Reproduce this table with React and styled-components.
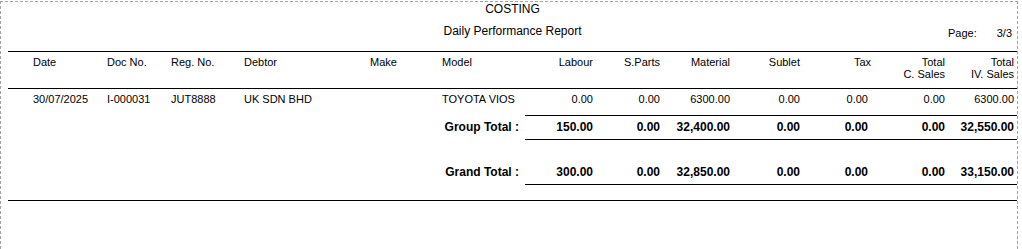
import React from "react";
import styled, { createGlobalStyle } from "styled-components";

const GlobalStyle = createGlobalStyle`
  html, body {
    margin: 0;
    padding: 0;
    background: #ffffff;
    overflow: hidden;
  }
  body {
    font-family: "Liberation Sans", Arial, sans-serif;
    color: #000000;
  }
`;

const COLS =
  "25px 74px 64px 73px 126px 72px 83px 68px 67px 70px 70px 71px 74px 69px 3px";
const FIG_COLS = "68px 67px 70px 70px 71px 74px 69px 3px";

const Sheet = styled.div`
  box-sizing: border-box;
  margin-top: 1px;
  width: 1018px;
  height: 248px;
  border: 1px dashed #a3a3a3;
  border-bottom: none;
  padding-left: 7px;
  display: flex;
  flex-direction: column;
`;

const TitleBlock = styled.header`
  display: grid;
  grid-template-columns: 1fr auto 1fr;
  row-gap: 8px;
  align-items: start;
`;

const Title = styled.div`
  grid-column: 2;
  font-size: 12px;
  line-height: 14px;
  text-align: center;
  white-space: nowrap;
`;

const PageInfo = styled.div`
  grid-column: 3;
  justify-self: end;
  width: 64px;
  margin-right: 5px;
  padding-top: 3px;
  display: flex;
  justify-content: space-between;
  font-size: 11px;
  line-height: 13px;
`;

const HeaderGrid = styled.div`
  margin-top: 11px;
  display: grid;
  grid-template-columns: ${COLS};
  border-top: 1px solid #000;
  border-bottom: 1px solid #000;
  padding: 4px 0 8px;
`;

const HeadCell = styled.div`
  grid-column: ${(p) => p.$col};
  font-size: 11px;
  line-height: 12px;
  white-space: pre-line;
  text-align: ${(p) => (p.$right ? "right" : "left")};
`;

const DataRow = styled.div`
  display: grid;
  grid-template-columns: ${COLS};
  padding-top: 4px;
`;

const DataCell = styled.div`
  grid-column: ${(p) => p.$col};
  font-size: 11px;
  line-height: 13px;
  white-space: nowrap;
  text-align: ${(p) => (p.$right ? "right" : "left")};
  padding-right: ${(p) => p.$pr || 0}px;
`;

const TotalRow = styled.div`
  display: grid;
  grid-template-columns: ${COLS};
  align-items: end;
  margin-top: ${(p) => p.$gap}px;
`;

const TotalLabel = styled.div`
  grid-column: 1 / 8;
  text-align: right;
  padding-right: 6px;
  padding-bottom: 6px;
  font-size: 12px;
  line-height: 14px;
  font-weight: 700;
  white-space: nowrap;
`;

const Figures = styled.div`
  grid-column: 8 / -1;
  display: grid;
  grid-template-columns: ${FIG_COLS};
  border-top: ${(p) => (p.$topLine ? "1px solid #000" : "none")};
  border-bottom: 1px solid #000;
  padding: ${(p) => (p.$topLine ? 4 : 0)}px 0 5px;
`;

const Figure = styled.div`
  font-size: 12px;
  line-height: 14px;
  font-weight: 700;
  text-align: right;
  white-space: nowrap;
  padding-right: ${(p) => p.$pr || 0}px;
`;

const BottomRule = styled.div`
  margin-top: 15px;
  border-top: 1px solid #000;
`;

const headers = [
  { col: 2, text: "Date" },
  { col: 3, text: "Doc No." },
  { col: 4, text: "Reg. No." },
  { col: 5, text: "Debtor" },
  { col: 6, text: "Make" },
  { col: 7, text: "Model" },
  { col: 8, text: "Labour", right: true },
  { col: 9, text: "S.Parts", right: true },
  { col: 10, text: "Material", right: true },
  { col: 11, text: "Sublet", right: true },
  { col: 12, text: "Tax", right: true },
  { col: 13, text: "Total\nC. Sales", right: true },
  { col: 14, text: "Total\nIV. Sales", right: true },
];

const row = [
  { col: 2, text: "30/07/2025" },
  { col: 3, text: "I-000031" },
  { col: 4, text: "JUT8888" },
  { col: 5, text: "UK SDN BHD" },
  { col: 6, text: "" },
  { col: 7, text: "TOYOTA VIOS" },
  { col: 8, text: "0.00", right: true },
  { col: 9, text: "0.00", right: true },
  { col: 10, text: "6300.00", right: true },
  { col: 11, text: "0.00", right: true },
  { col: 12, text: "0.00", right: true, pr: 3 },
  { col: 13, text: "0.00", right: true },
  { col: 14, text: "6300.00", right: true },
];

const totals = [
  {
    label: "Group Total :",
    gap: 9,
    topLine: true,
    values: ["150.00", "0.00", "32,400.00", "0.00", "0.00", "0.00", "32,550.00"],
  },
  {
    label: "Grand Total :",
    gap: 25,
    topLine: false,
    values: ["300.00", "0.00", "32,850.00", "0.00", "0.00", "0.00", "33,150.00"],
  },
];

export default function App() {
  return (
    <>
      <GlobalStyle />
      <Sheet>
        <TitleBlock>
          <Title>COSTING</Title>
          <Title>Daily Performance Report</Title>
          <PageInfo>
            <span>Page:</span>
            <span>3/3</span>
          </PageInfo>
        </TitleBlock>

        <HeaderGrid>
          {headers.map((h) => (
            <HeadCell key={h.col} $col={h.col} $right={h.right}>
              {h.text}
            </HeadCell>
          ))}
        </HeaderGrid>

        <DataRow>
          {row.map((c) => (
            <DataCell key={c.col} $col={c.col} $right={c.right} $pr={c.pr}>
              {c.text}
            </DataCell>
          ))}
        </DataRow>

        {totals.map((t) => (
          <TotalRow key={t.label} $gap={t.gap}>
            <TotalLabel>{t.label}</TotalLabel>
            <Figures $topLine={t.topLine}>
              {t.values.map((v, i) => (
                <Figure key={i} $pr={i === 4 ? 3 : 0}>
                  {v}
                </Figure>
              ))}
              <span />
            </Figures>
          </TotalRow>
        ))}

        <BottomRule />
      </Sheet>
    </>
  );
}
